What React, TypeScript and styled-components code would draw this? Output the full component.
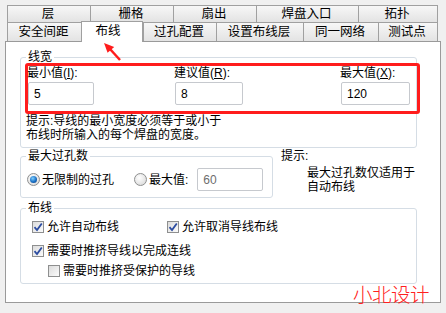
import styled, { createGlobalStyle } from 'styled-components';

const GlobalStyle = createGlobalStyle`
  body {
    margin: 0;
    background: #f0f0f0;
    font-family: "Liberation Sans", "Noto Sans CJK SC", sans-serif;
    font-size: 12px;
    color: #000;
  }
`;

const Window = styled.div`
  position: relative;
  width: 446px;
  height: 313px;
  padding-top: 5px;
  box-sizing: border-box;
  overflow: hidden;
`;

const TabRow = styled.div<{ $h: number }>`
  display: flex;
  align-items: flex-start;
  margin-left: 7px;
  height: ${p => p.$h}px;
`;

const Tab = styled.div<{ $w: number; $active?: boolean; $last?: boolean }>`
  box-sizing: border-box;
  width: ${p => p.$w}px;
  height: ${p => (p.$active ? 'calc(100% + 2px)' : '100%')};
  margin-top: ${p => (p.$active ? '-1px' : '0')};
  position: ${p => (p.$active ? 'relative' : 'static')};
  z-index: ${p => (p.$active ? 1 : 0)};
  border: 1px solid #a0a0a0;
  border-bottom: none;
  border-right: ${p => (p.$last || p.$active ? '1px solid #a0a0a0' : 'none')};
  background: ${p => (p.$active ? '#fff' : 'linear-gradient(#f7f7f7, #e3e3e3)')};
  display: flex;
  align-items: ${p => (p.$active ? 'flex-start' : 'center')};
  justify-content: center;
  padding-top: ${p => (p.$active ? '1px' : '0')};
  padding-right: ${p => (p.$active ? '8px' : '2px')};
  font-size: 12.5px;
  line-height: 16px;
`;

const Panel = styled.div`
  box-sizing: border-box;
  margin-left: 5px;
  width: 436px;
  height: 262px;
  border: 1px solid #9a9a9a;
  background: #fff;
  padding: 8px 0 0 14px;
`;

const Group = styled.fieldset<{ $w: number; $mt?: number }>`
  box-sizing: border-box;
  width: ${p => p.$w}px;
  margin: ${p => p.$mt ?? 0}px 0 0 0;
  padding: 0;
  min-width: 0;
  border: 1px solid #d5dde5;
  border-radius: 3px;
`;

const Legend = styled.legend`
  margin-left: 5px;
  padding: 0 2px;
  line-height: 14px;
  font-size: 12px;
`;

const Highlight = styled.div`
  box-sizing: border-box;
  width: 395px;
  margin: -1px 0 0 4px;
  border: 3px solid #ff1c1c;
  border-radius: 3px;
  padding-bottom: 6px;
  display: grid;
  grid-template-columns: 147px 166px 1fr;
`;

const Field = styled.div`
  display: flex;
  flex-direction: column;
  align-items: flex-start;
`;

const Label = styled.span`
  line-height: 14px;
  white-space: nowrap;
  margin-left: -1px;
`;

const TextBox = styled.input<{ $w: number }>`
  box-sizing: border-box;
  flex-shrink: 0;
  width: ${p => p.$w}px;
  height: 23px;
  margin: 2px 0 0 0;
  border: 1px solid #c6c9ce;
  border-radius: 2px;
  padding: 0 0 0 5px;
  font-family: "Liberation Sans", sans-serif;
  font-size: 12px;
  color: #000;
  background: #fff;
  outline: none;
  &:disabled {
    color: #6d6d6d;
    border-color: #c6c9ce;
  }
`;

const Note = styled.div`
  padding: 0 0 5px 5px;
  line-height: 14px;
`;

const SideBySide = styled.div`
  display: flex;
  align-items: flex-start;
`;

const RadioRow = styled.div`
  display: flex;
  align-items: center;
  padding: 5px 0 6px 6px;
`;

const RadioDot = styled.span<{ $on?: boolean }>`
  box-sizing: border-box;
  flex-shrink: 0;
  width: 13px;
  height: 13px;
  border-radius: 50%;
  border: 1px solid #8e8f8f;
  background: radial-gradient(circle at 40% 35%, #ffffff, #d4d4d4);
  display: flex;
  align-items: center;
  justify-content: center;
  margin-right: 2px;
  &::after {
    content: '';
    display: ${p => (p.$on ? 'block' : 'none')};
    width: 7px;
    height: 7px;
    border-radius: 50%;
    background: radial-gradient(circle at 40% 35%, #7fd0ff, #1a6fc4 55%, #0a3a7a);
  }
`;

const OptionText = styled.span<{ $mr?: number }>`
  margin-right: ${p => p.$mr ?? 0}px;
  line-height: 14px;
  white-space: nowrap;
`;

const Hint = styled.div`
  margin: 1px 0 0 8px;
  line-height: 14px;
`;

const HintBody = styled.div`
  margin-top: 3px;
  padding-left: 26px;
`;

const Checks = styled.div`
  padding: 5px 0 5px 11px;
`;

const CheckRow = styled.div<{ $mt?: number; $indent?: number }>`
  display: grid;
  grid-template-columns: 135px 1fr;
  margin-top: ${p => p.$mt ?? 0}px;
  padding-left: ${p => p.$indent ?? 0}px;
  line-height: 14px;
`;

const CheckItem = styled.label`
  display: flex;
  align-items: center;
  white-space: nowrap;
`;

const Box = styled.span`
  box-sizing: border-box;
  flex-shrink: 0;
  width: 12px;
  height: 12px;
  border: 1px solid #8e8f8f;
  background: linear-gradient(135deg, #dcdcdc, #fbfbfb);
  margin-right: 3px;
  display: flex;
  align-items: center;
  justify-content: center;
`;

const Watermark = styled.div`
  position: absolute;
  left: 353px;
  top: 283px;
  font-family: "Noto Sans CJK SC", sans-serif;
  font-weight: 300;
  font-size: 19.5px;
  line-height: 22px;
  color: #ff2020;
  letter-spacing: -0.5px;
`;

const Arrow = styled.svg`
  position: absolute;
  left: 100px;
  top: 40px;
`;

function Check({ on, children }: { on?: boolean; children: string }) {
  return (
    <CheckItem>
      <Box>
        {on && (
          <svg width="10" height="10" viewBox="0 0 10 10">
            <path d="M1.5 5.2 L4 8 L8.8 1.5" fill="none" stroke="#2c4ca0" strokeWidth="1.8" />
          </svg>
        )}
      </Box>
      {children}
    </CheckItem>
  );
}

const topTabs = [
  { t: '层', w: 83 },
  { t: '栅格', w: 83 },
  { t: '扇出', w: 83 },
  { t: '焊盘入口', w: 102 },
  { t: '拓扑', w: 80 },
];

const bottomTabs = [
  { t: '安全间距', w: 74 },
  { t: '布线', w: 62, active: true },
  { t: '过孔配置', w: 73 },
  { t: '设置布线层', w: 87 },
  { t: '同一网络', w: 75 },
  { t: '测试点', w: 60 },
];

export default function App() {
  return (
    <Window>
      <GlobalStyle />
      <TabRow $h={17}>
        {topTabs.map((tab, i) => (
          <Tab key={tab.t} $w={tab.w} $last={i === topTabs.length - 1}>
            {tab.t}
          </Tab>
        ))}
      </TabRow>
      <TabRow $h={19}>
        {bottomTabs.map((tab, i) => (
          <Tab key={tab.t} $w={tab.w} $active={tab.active} $last={i === bottomTabs.length - 1}>
            {tab.t}
          </Tab>
        ))}
      </TabRow>
      <Panel>
        <Group $w={397}>
          <Legend>线宽</Legend>
          <Highlight>
            <Field>
              <Label>最小值(<u>I</u>):</Label>
              <TextBox $w={66} value="5" readOnly />
            </Field>
            <Field>
              <Label>建议值(<u>R</u>):</Label>
              <TextBox $w={68} value="8" readOnly />
            </Field>
            <Field>
              <Label>最大值(<u>X</u>):</Label>
              <TextBox $w={69} value="120" readOnly />
            </Field>
          </Highlight>
          <Note>
            提示:导线的最小宽度必须等于或小于
            <br />
            布线时所输入的每个焊盘的宽度。
          </Note>
        </Group>

        <SideBySide>
          <Group $w={253} $mt={1}>
            <Legend>最大过孔数</Legend>
            <RadioRow>
              <RadioDot $on />
              <OptionText $mr={20}>无限制的过孔</OptionText>
              <RadioDot />
              <OptionText $mr={9}>最大值:</OptionText>
              <TextBox $w={66} value="60" disabled style={{ marginTop: 0 }} />
            </RadioRow>
          </Group>
          <Hint>
            提示:
            <HintBody>
              最大过孔数仅适用于
              <br />
              自动布线
            </HintBody>
          </Hint>
        </SideBySide>

        <Group $w={397} $mt={3}>
          <Legend>布线</Legend>
          <Checks>
            <CheckRow>
              <Check on>允许自动布线</Check>
              <Check on>允许取消导线布线</Check>
            </CheckRow>
            <CheckRow $mt={10}>
              <Check on>需要时推挤导线以完成连线</Check>
            </CheckRow>
            <CheckRow $mt={6} $indent={16}>
              <Check>需要时推挤受保护的导线</Check>
            </CheckRow>
          </Checks>
        </Group>
      </Panel>

      <Arrow width="26" height="26" viewBox="0 0 26 26">
        <line x1="10" y1="9" x2="20" y2="20" stroke="#ff1c1c" strokeWidth="2.5" />
        <polygon points="4,3 7.6,12.8 14.2,7" fill="#ff1c1c" />
      </Arrow>
      <Watermark>小北设计</Watermark>
    </Window>
  );
}
